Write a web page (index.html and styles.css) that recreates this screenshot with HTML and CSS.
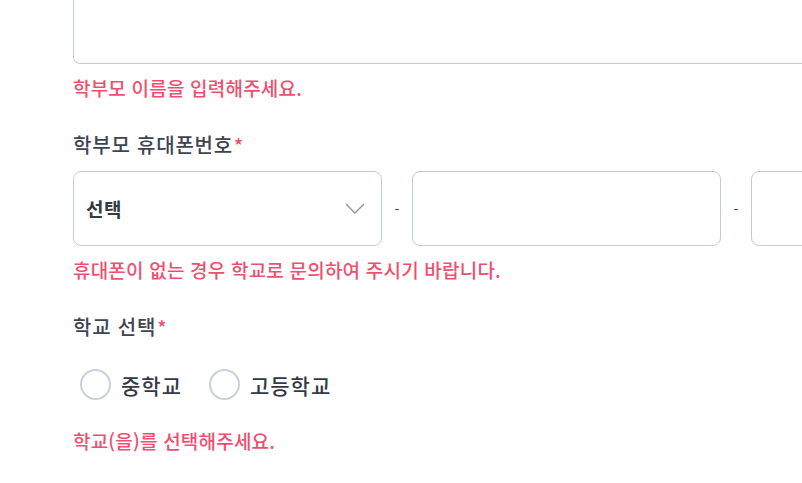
FILE: index.html
```html
<!DOCTYPE html>
<html lang="ko">
<head>
<meta charset="utf-8">
<link rel="stylesheet" href="styles.css">
</head>
<body>
<div class="form">
  <div class="field first">
    <div class="textbox"></div>
    <p class="error">학부모 이름을 입력해주세요.</p>
  </div>
  <div class="field">
    <label class="label">학부모 휴대폰번호<span class="req">*</span></label>
    <div class="phone-row">
      <div class="select">
        <span class="select-value">선택</span>
        <svg class="chevron" width="20" height="11" viewBox="0 0 20 11"><path d="M1 1 L10 10 L19 1" fill="none" stroke="#8c96a8" stroke-width="1.4"/></svg>
      </div>
      <span class="dash">-</span>
      <div class="input"></div>
      <span class="dash">-</span>
      <div class="input"></div>
    </div>
    <p class="error">휴대폰이 없는 경우 학교로 문의하여 주시기 바랍니다.</p>
  </div>
  <div class="field">
    <label class="label">학교 선택<span class="req">*</span></label>
    <div class="radios">
      <label class="radio"><span class="circle"></span><span class="radio-text">중학교</span></label>
      <label class="radio"><span class="circle"></span><span class="radio-text">고등학교</span></label>
    </div>
    <p class="error">학교(을)를 선택해주세요.</p>
  </div>
</div>
</body>
</html>
```
FILE: styles.css
```css
html, body {
  margin: 0;
  padding: 0;
  background: #ffffff;
  overflow: hidden;
}
body {
  font-family: "Noto Sans CJK KR", "Noto Sans", sans-serif;
  width: 802px;
  height: 483px;
}
.form {
  padding-left: 73px;
  width: 1000px;
  display: flex;
  flex-direction: column;
}
.field {
  display: flex;
  flex-direction: column;
  margin-top: 29px;
}
.field.first {
  margin-top: -40px;
}
.textbox {
  width: 986px;
  height: 104px;
  box-sizing: border-box;
  border: 1px solid #c3cbd8;
  border-radius: 7px;
}
.error {
  margin: 10px 0 0;
  font-size: 19px;
  line-height: 28px;
  letter-spacing: 0.2px;
  font-weight: 500;
  color: #ef4f6f;
}
.label {
  font-size: 20px;
  line-height: 28px;
  letter-spacing: 0.8px;
  font-weight: 500;
  color: #3e4450;
}
.req {
  color: #f0506e;
  margin-left: 1px;
  font-size: 19px;
  letter-spacing: 0;
}
.phone-row {
  margin-top: 12px;
  display: flex;
  align-items: center;
}
.select, .input {
  width: 309px;
  height: 75px;
  box-sizing: border-box;
  border: 1px solid #c3cbd8;
  border-radius: 8px;
  flex: none;
}
.select {
  display: flex;
  align-items: center;
  justify-content: space-between;
  padding: 0 16px 0 12px;
}
.select-value {
  font-size: 19px;
  letter-spacing: 0.5px;
  font-weight: 700;
  color: #333a46;
}
.chevron {
  display: block;
}
.dash {
  width: 30px;
  text-align: center;
  font-size: 14px;
  color: #3e4450;
  flex: none;
}
.radios {
  margin-top: 28px;
  padding-left: 7px;
  display: flex;
  align-items: center;
  gap: 27px;
  height: 31px;
}
.radio {
  display: flex;
  align-items: center;
  gap: 10px;
}
.circle {
  width: 31px;
  height: 31px;
  box-sizing: border-box;
  border: 2px solid #c9d0dc;
  border-radius: 50%;
}
.radio-text {
  font-size: 21px;
  line-height: 28px;
  letter-spacing: 1px;
  font-weight: 500;
  color: #333a46;
}
.radios + .error {
  margin-top: 27px;
}
```
